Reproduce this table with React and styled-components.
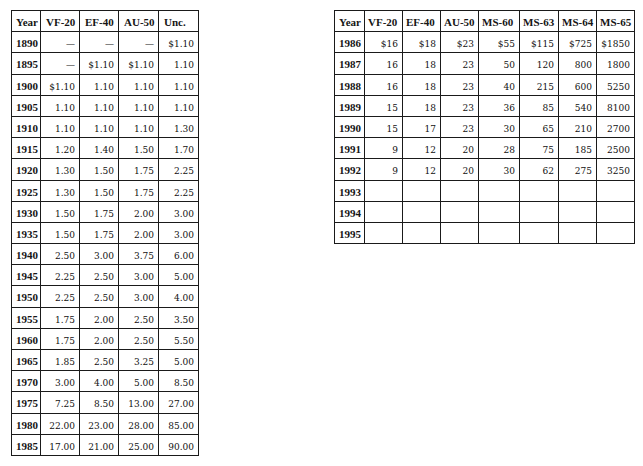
import styled, { createGlobalStyle } from "styled-components";

const GlobalStyle = createGlobalStyle`
  html, body {
    margin: 0;
    padding: 0;
    background: #ffffff;
  }
  body {
    font-family: "Liberation Serif", "Times New Roman", serif;
    color: #151515;
  }
`;

const Page = styled.div`
  display: flex;
  align-items: flex-start;
  gap: 135px;
  padding: 10px 0 0 11px;
  width: 643px;
  height: 466px;
  box-sizing: border-box;
`;

const Table = styled.table`
  border-collapse: collapse;
  table-layout: fixed;
  border: 1px solid #1a1a1a;
  font-size: 11px;
  line-height: 12px;
`;

const Row = styled.tr`
  height: 21.2px;
`;

const HeadCell = styled.th`
  border: 1px solid #1a1a1a;
  padding: 5px 0 0 ${(p) => p.$pad || 4}px;
  text-align: left;
  vertical-align: baseline;
  font-weight: 700;
  white-space: nowrap;
  overflow: hidden;
`;

const YearCell = styled.th`
  border: 1px solid #1a1a1a;
  padding: 5px 0 0 4px;
  text-align: left;
  vertical-align: baseline;
  font-weight: 700;
`;

const ValueCell = styled.td`
  border: 1px solid #1a1a1a;
  padding: 5px 4px 0 0;
  text-align: right;
  vertical-align: baseline;
  white-space: nowrap;
  font-family: "DejaVu Serif", "Liberation Serif", serif;
  font-size: 9px;
  color: #111;
`;

const early = {
  cols: [29, 39, 39, 40, 40],
  head: ["Year", "VF-20", "EF-40", "AU-50", "Unc."],
  rows: [
    ["1890", "—", "—", "—", "$1.10"],
    ["1895", "—", "$1.10", "$1.10", "1.10"],
    ["1900", "$1.10", "1.10", "1.10", "1.10"],
    ["1905", "1.10", "1.10", "1.10", "1.10"],
    ["1910", "1.10", "1.10", "1.10", "1.30"],
    ["1915", "1.20", "1.40", "1.50", "1.70"],
    ["1920", "1.30", "1.50", "1.75", "2.25"],
    ["1925", "1.30", "1.50", "1.75", "2.25"],
    ["1930", "1.50", "1.75", "2.00", "3.00"],
    ["1935", "1.50", "1.75", "2.00", "3.00"],
    ["1940", "2.50", "3.00", "3.75", "6.00"],
    ["1945", "2.25", "2.50", "3.00", "5.00"],
    ["1950", "2.25", "2.50", "3.00", "4.00"],
    ["1955", "1.75", "2.00", "2.50", "3.50"],
    ["1960", "1.75", "2.00", "2.50", "5.50"],
    ["1965", "1.85", "2.50", "3.25", "5.00"],
    ["1970", "3.00", "4.00", "5.00", "8.50"],
    ["1975", "7.25", "8.50", "13.00", "27.00"],
    ["1980", "22.00", "23.00", "28.00", "85.00"],
    ["1985", "17.00", "21.00", "25.00", "90.00"],
  ],
};

const recent = {
  cols: [30, 38, 38, 38, 41, 39, 38, 38],
  head: ["Year", "VF-20", "EF-40", "AU-50", "MS-60", "MS-63", "MS-64", "MS-65"],
  rows: [
    ["1986", "$16", "$18", "$23", "$55", "$115", "$725", "$1850"],
    ["1987", "16", "18", "23", "50", "120", "800", "1800"],
    ["1988", "16", "18", "23", "40", "215", "600", "5250"],
    ["1989", "15", "18", "23", "36", "85", "540", "8100"],
    ["1990", "15", "17", "23", "30", "65", "210", "2700"],
    ["1991", "9", "12", "20", "28", "75", "185", "2500"],
    ["1992", "9", "12", "20", "30", "62", "275", "3250"],
    ["1993", "", "", "", "", "", "", ""],
    ["1994", "", "", "", "", "", "", ""],
    ["1995", "", "", "", "", "", "", ""],
  ],
};

const PriceTable = ({ data, headPad }) => (
  <Table style={{ width: data.cols.reduce((a, b) => a + b, 0) }}>
    <colgroup>
      {data.cols.map((w, i) => (
        <col key={i} style={{ width: w }} />
      ))}
    </colgroup>
    <thead>
      <Row>
        {data.head.map((h, i) => (
          <HeadCell key={h} $pad={i === 0 ? 4 : headPad}>
            {h}
          </HeadCell>
        ))}
      </Row>
    </thead>
    <tbody>
      {data.rows.map(([year, ...vals]) => (
        <Row key={year}>
          <YearCell>{year}</YearCell>
          {vals.map((v, i) => (
            <ValueCell key={i}>{v}</ValueCell>
          ))}
        </Row>
      ))}
    </tbody>
  </Table>
);

export default function App() {
  return (
    <>
      <GlobalStyle />
      <Page>
        <PriceTable data={early} headPad={5} />
        <PriceTable data={recent} headPad={3} />
      </Page>
    </>
  );
}
